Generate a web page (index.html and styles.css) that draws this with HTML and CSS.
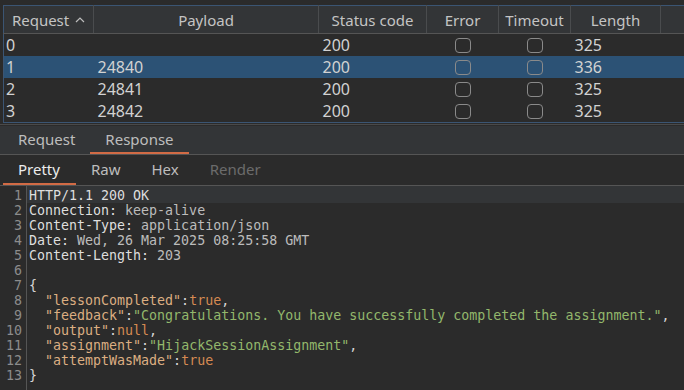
FILE: index.html
```html
<!DOCTYPE html>
<html lang="en">
<head>
  <meta charset="UTF-8">
  <title>Intruder results</title>
  <link rel="stylesheet" href="styles.css">
</head>
<body>

  <div class="results">
    <table class="grid">
      <colgroup>
        <col style="width:90px">
        <col style="width:225px">
        <col style="width:108px">
        <col style="width:72px">
        <col style="width:72px">
        <col style="width:90px">
        <col>
      </colgroup>
      <thead>
        <tr>
          <th>Request <svg class="sort" width="10" height="6" viewBox="0 0 10 6"><polyline points="1,5 5,1 9,5" fill="none" stroke="#bdbdbd" stroke-width="1.2"/></svg></th>
          <th>Payload</th>
          <th>Status code</th>
          <th>Error</th>
          <th>Timeout</th>
          <th>Length</th>
          <th></th>
        </tr>
      </thead>
      <tbody>
        <tr>
          <td>0</td><td></td><td>200</td>
          <td class="check"><span class="box"></span></td>
          <td class="check"><span class="box"></span></td>
          <td>325</td><td></td>
        </tr>
        <tr class="selected">
          <td>1</td><td>24840</td><td>200</td>
          <td class="check"><span class="box"></span></td>
          <td class="check"><span class="box"></span></td>
          <td>336</td><td></td>
        </tr>
        <tr>
          <td>2</td><td>24841</td><td>200</td>
          <td class="check"><span class="box"></span></td>
          <td class="check"><span class="box"></span></td>
          <td>325</td><td></td>
        </tr>
        <tr>
          <td>3</td><td>24842</td><td>200</td>
          <td class="check"><span class="box"></span></td>
          <td class="check"><span class="box"></span></td>
          <td>325</td><td></td>
        </tr>
      </tbody>
    </table>
  </div>

  <div class="tabs">
    <span class="tab">Request</span>
    <span class="tab active">Response</span>
  </div>

  <div class="subtabs">
    <span class="subtab active">Pretty</span>
    <span class="subtab">Raw</span>
    <span class="subtab">Hex</span>
    <span class="subtab disabled">Render</span>
  </div>

  <div class="editor">
    <div class="gutter">
      <div>1</div><div>2</div><div>3</div><div>4</div><div>5</div><div>6</div><div>7</div>
      <div>8</div><div>9</div><div>10</div><div>11</div><div>12</div><div>13</div>
    </div>
    <div class="code">
      <div class="line current"><span class="hname">HTTP/1.1 200 OK</span></div>
      <div class="line"><span class="hname">Connection:</span> <span class="hval">keep-alive</span></div>
      <div class="line"><span class="hname">Content-Type:</span> <span class="hval">application/json</span></div>
      <div class="line"><span class="hname">Date:</span> <span class="hval">Wed, 26 Mar 2025 08:25:58 GMT</span></div>
      <div class="line"><span class="hname">Content-Length:</span> <span class="hval">203</span></div>
      <div class="line"></div>
      <div class="line">{</div>
      <div class="line">  <span class="key">"lessonCompleted"</span>:<span class="lit">true</span>,</div>
      <div class="line">  <span class="key">"feedback"</span>:<span class="str">"Congratulations. You have successfully completed the assignment."</span>,</div>
      <div class="line">  <span class="key">"output"</span>:<span class="lit">null</span>,</div>
      <div class="line">  <span class="key">"assignment"</span>:<span class="str">"HijackSessionAssignment"</span>,</div>
      <div class="line">  <span class="key">"attemptWasMade"</span>:<span class="lit">true</span></div>
      <div class="line">}</div>
    </div>
  </div>

</body>
</html>
```

FILE: styles.css
```css
body {
  margin: 0;
  width: 684px;
  height: 390px;
  overflow: hidden;
  background-color: #2b2b2b;
  font-family: "Noto Sans", sans-serif;
  color: #cfcfcf;
}

.results {
  padding: 5px 0 0 3px;
  border-bottom: 1px solid #4a4a4a;
  padding-bottom: 1px;
}

.grid {
  width: 681px;
  table-layout: fixed;
  border-collapse: collapse;
  border-top: 1px solid #3b5573;
  border-left: 1px solid #3b5573;
  border-bottom: 1px solid #3b5573;
  font-size: 15px;
}

.grid th {
  height: 27px;
  padding: 0;
  font-weight: normal;
  color: #c4c4c4;
  background-color: #333537;
  border-right: 1px solid #4a4c4e;
  border-bottom: 1px solid #555;
  text-align: center;
  white-space: nowrap;
}

.grid th:last-child {
  border-right: none;
}

.sort {
  vertical-align: 3px;
  margin-left: 2px;
}

.grid td {
  height: 22px;
  padding: 0 0 0 4px;
  font-size: 16px;
  color: #d2d2d2;
  line-height: 22px;
}

.grid td:first-child {
  padding-left: 2px;
}

.selected td {
  background-color: #2c5275;
}

.check {
  text-align: center;
  padding: 0 !important;
}

.box {
  display: inline-block;
  width: 14px;
  height: 13px;
  border: 1.5px solid #8a8a8a;
  border-radius: 4px;
  vertical-align: middle;
  margin-top: -2px;
}

.tabs {
  display: flex;
  height: 28px;
  margin-top: 1px;
  padding-left: 3px;
  background-color: #333537;
  border-bottom: 1px solid #555;
  font-size: 15px;
}

.tab {
  display: flex;
  align-items: center;
  padding: 0 15px;
  color: #bdbdbd;
  border-bottom: 2px solid transparent;
}

.tab.active {
  border-bottom-color: #d26b45;
}

.subtabs {
  display: flex;
  height: 30px;
  padding-left: 3px;
  border-bottom: 1px solid #555;
  font-size: 15px;
}

.subtab {
  display: flex;
  align-items: center;
  padding: 0 16px 0 15px;
  color: #bdbdbd;
  border-bottom: 2px solid transparent;
}

.subtab.active {
  color: #ececec;
  border-bottom-color: #d26b45;
}

.subtab.disabled {
  color: #6b6b6b;
}

.editor {
  display: flex;
  height: 204px;
  overflow: hidden;
  font-family: "DejaVu Sans Mono", monospace;
  font-size: 13.3px;
  line-height: 15px;
}

.gutter {
  width: 22px;
  padding: 2px 4px 0 0;
  text-align: right;
  color: #8c8c8c;
  border-right: 1px solid #555;
}

.code {
  flex: 1;
  color: #d6d6d6;
}

.line {
  padding-left: 2px;
  height: 15px;
  white-space: pre;
}

.line.current {
  padding-top: 2px;
  background-color: #333537;
}

.hname { color: #dedede; }
.hval  { color: #bcbcbc; }
.key   { color: #dcae82; }
.lit   { color: #d58a52; }
.str   { color: #93b86c; }
```
